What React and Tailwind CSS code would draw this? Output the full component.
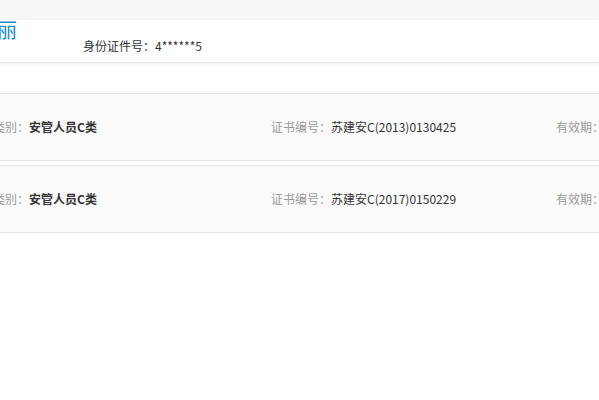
import React from 'react';

const certs = [
  { type: '安管人员C类', no: '苏建安C(2013)0130425' },
  { type: '安管人员C类', no: '苏建安C(2017)0150229' },
];

const App = () => {
  return (
    <div
      className="w-[599px] h-[400px] bg-white overflow-hidden text-[12px]"
      style={{ fontFamily: '"Noto Sans CJK SC", "Noto Sans", sans-serif' }}
    >
      <div className="h-[20px] bg-[#f7f7f7]" />
      <div className="h-[43px] bg-white border-b border-[#e6e6e6] shadow-[0_1px_2px_rgba(0,0,0,0.06)] flex items-start">
        <div className="-ml-[3px] text-[20px] leading-[20px] text-[#1a8ccf] mt-[0px]">丽</div>
        <div className="ml-[66px] mt-[17px] leading-[18px] text-[#333]">身份证件号：4******5</div>
      </div>
      <div className="mt-[30px] flex flex-col gap-[4px]">
        {certs.map((c, i) => (
          <div
            key={i}
            className="h-[68px] bg-[#fafafa] border-y border-[#e8e8e8] flex items-center -ml-[7px] w-[620px]"
          >
            <div className="w-[278px] whitespace-nowrap">
              <span className="text-[#999]">类别：</span>
              <span className="text-[#333] font-bold">{c.type}</span>
            </div>
            <div className="w-[285px] whitespace-nowrap">
              <span className="text-[#999]">证书编号：</span>
              <span className="text-[#333]">{c.no}</span>
            </div>
            <div className="whitespace-nowrap text-[#999]">有效期：</div>
          </div>
        ))}
      </div>
    </div>
  );
};

export default App;
